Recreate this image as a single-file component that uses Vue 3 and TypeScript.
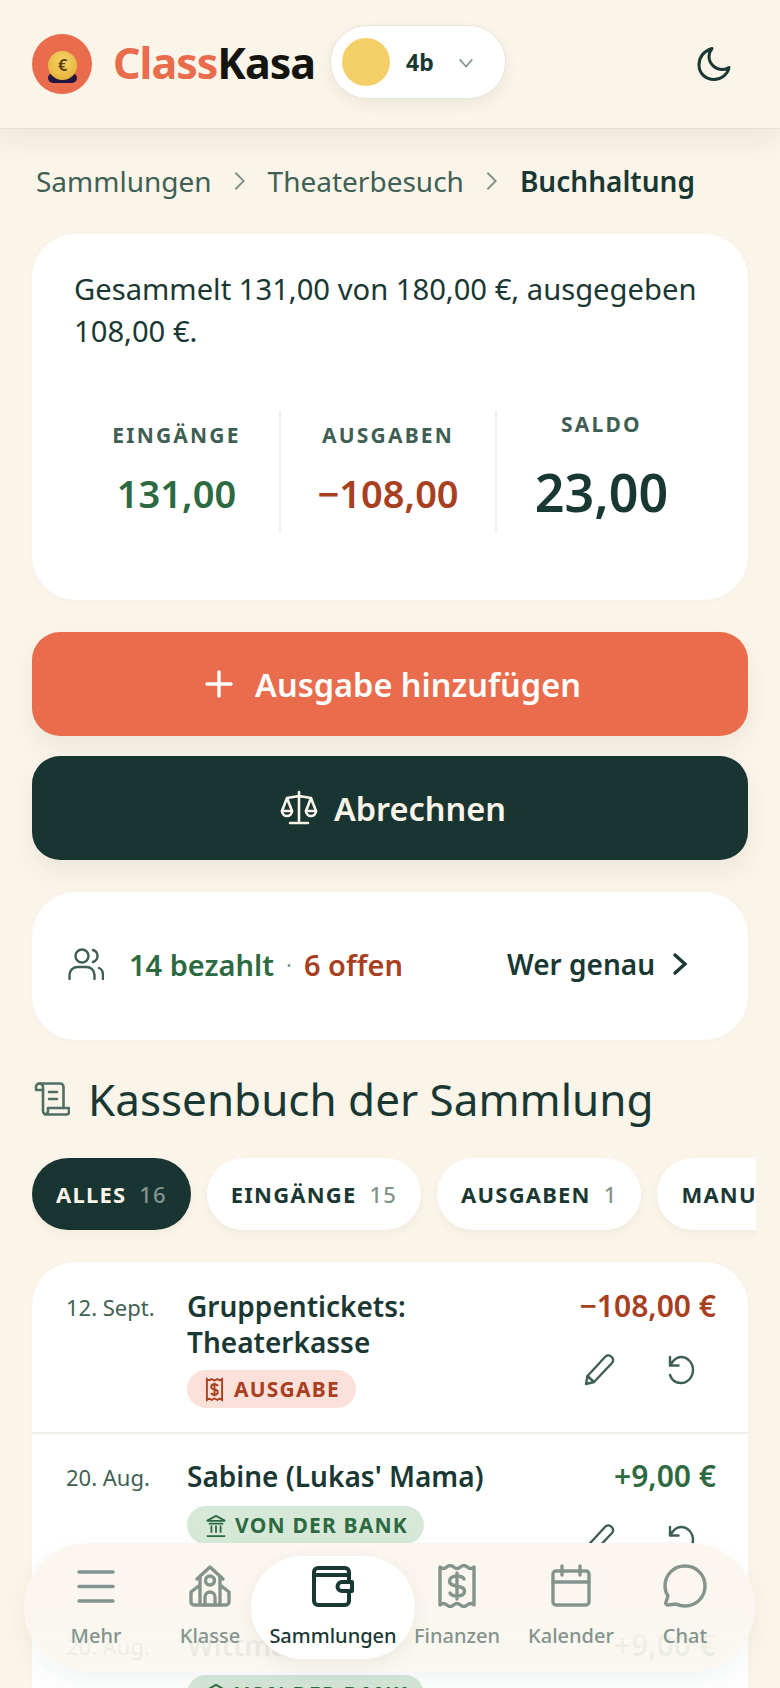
<template>
  <div class="page">
    <header class="topbar">
      <div class="logo">
        <span class="coin-base"></span>
        <span class="coin">€</span>
      </div>
      <div class="brand"><span class="brand-a">Class</span>Kasa</div>
      <button class="class-pill">
        <span class="swatch"></span>
        <span class="class-name">4b</span>
        <svg class="pill-chevron" viewBox="0 0 20 20"><path d="M3 6l7 8 7-8" /></svg>
      </button>
      <svg class="moon" viewBox="0 0 36 36"><path d="M16 2.500C9 5 3 10.500 3 19c0 8.500 6.500 14.500 15 14.500 7.500 0 13.500-5 15-12-2 1.500-4 2-6.500 2C19 23.500 13 17.500 13 10.500c0-3 1-5.500 3-8Z" /></svg>
    </header>

    <main class="content">
      <nav class="crumbs">
        <span>Sammlungen</span>
        <svg class="crumb-sep" viewBox="0 0 14 24"><path d="M2 3l9 9-9 9" /></svg>
        <span>Theaterbesuch</span>
        <svg class="crumb-sep" viewBox="0 0 14 24"><path d="M2 3l9 9-9 9" /></svg>
        <strong>Buchhaltung</strong>
      </nav>

      <section class="card summary">
        <p class="summary-text">Gesammelt 131,00 von 180,00 €, ausgegeben 108,00 €.</p>
        <div class="stats">
          <div class="stat">
            <span class="stat-label">EINGÄNGE</span>
            <span class="stat-value plus">131,00</span>
          </div>
          <div class="stat">
            <span class="stat-label">AUSGABEN</span>
            <span class="stat-value minus">−108,00</span>
          </div>
          <div class="stat">
            <span class="stat-label">SALDO</span>
            <span class="stat-total">23,00</span>
          </div>
        </div>
      </section>

      <button class="action orange">
        <svg class="action-plus" viewBox="0 0 28 28"><path d="M14 2v24M2 14h24" /></svg>
        Ausgabe hinzufügen
      </button>
      <button class="action dark">
        <svg class="action-scale" viewBox="0 0 38 36">
          <path d="M19 2v29M10 33h18M7 8l12-2 12 2M7 8l-5 13M7 8l5 13M31 8l-5 13M31 8l5 13" />
          <path d="M2 21a5 5 0 0 0 10 0ZM26 21a5 5 0 0 0 10 0Z" />
        </svg>
        Abrechnen
      </button>

      <section class="card paid">
        <svg class="people" viewBox="0 0 36 32">
          <circle cx="14" cy="8" r="6.500" />
          <path d="M1.500 31v-4c0-5 4-8 8-8h9c4 0 8 3 8 8v4M25 2c3 1 4.500 3.500 4.500 6s-1.500 5-4.500 6M31 20c2.500 1 4 4 4 7v4" />
        </svg>
        <span class="paid-yes">14 bezahlt</span>
        <span class="paid-dot">·</span>
        <span class="paid-no">6 offen</span>
        <span class="paid-link">Wer genau</span>
        <svg class="paid-chevron" viewBox="0 0 16 24"><path d="M3 3l10 9-10 9" /></svg>
      </section>

      <h2 class="ledger-title">
        <svg class="ledger-icon" viewBox="0 0 36 34">
          <path d="M2 7V5a3.500 3.500 0 0 1 7 0v24a3.500 3.500 0 0 0 3.500 3.500h20A2.500 2.500 0 0 0 35 30v-4H14v3a3.500 3.500 0 0 1-3 3.500" />
          <path d="M5 1.500h21a3.500 3.500 0 0 1 3.500 3.500v21M2 8h7M15 10h8M15 17h8" />
        </svg>
        Kassenbuch der Sammlung
      </h2>

      <div class="filters">
        <button
          v-for="f in filters"
          :key="f.label"
          class="chip"
          :class="{ active: f.active }"
        >
          {{ f.label }}<span v-if="f.count" class="chip-count">{{ f.count }}</span>
        </button>
      </div>

      <section class="card ledger">
        <article v-for="row in rows" :key="row.title" class="row">
          <span class="row-date">{{ row.date }}</span>
          <div class="row-main">
            <div class="row-title">{{ row.title }}</div>
            <span class="badge" :class="row.kind">
              <svg v-if="row.kind === 'out'" class="badge-icon" viewBox="0 0 20 26">
                <path d="M2 2l2.500 1.500L7 2l3 1.500L13 2l2.500 1.500L18 2v22l-2.500-1.500L13 24l-3-1.500L7 24l-2.500-1.500L2 24Z" />
                <path d="M13.500 9.500C13 8 11.500 7.500 10 7.500c-2 0-3.500 1-3.500 2.800 0 3.700 7 1.700 7 5.400 0 1.800-1.500 2.800-3.500 2.800-1.500 0-3-.5-3.500-2M10 6v14" />
              </svg>
              <svg v-else class="badge-icon bank" viewBox="0 0 24 26">
                <path d="M2 8l10-5.500L22 8ZM4 11h16M7 13v8M12 13v8M17 13v8M2 24.500h20" />
              </svg>
              {{ row.badge }}
            </span>
          </div>
          <div class="row-side">
            <div class="row-amount" :class="row.kind === 'out' ? 'minus' : 'plus'">{{ row.amount }}</div>
            <div class="row-actions">
              <svg class="row-icon" viewBox="0 0 32 32">
                <path d="M2 30l1.500-8 17.500-19c1.700-1.800 4.300-2 6.200-.4l.4.300c1.900 1.600 2 4.300.4 6.100L10 28Z" />
                <path d="M3.500 22L10 28" />
              </svg>
              <svg class="row-icon" viewBox="0 0 32 32">
                <path d="M6 3v8.500h8.500M6.500 11C9 6.500 12.500 3 17 3c6.500 0 12 5.800 12 13s-5.500 13-12 13c-5.500 0-9.500-3.500-11-8" />
              </svg>
            </div>
          </div>
        </article>
      </section>
    </main>

    <nav class="tabbar">
      <button v-for="t in tabs" :key="t.label" class="tab" :class="{ current: t.current }">
        <svg class="tab-icon" viewBox="0 0 44 44">
          <path v-for="d in t.paths" :key="d" :d="d" />
        </svg>
        <span>{{ t.label }}</span>
      </button>
    </nav>
  </div>
</template>

<script setup lang="ts">
interface Row {
  date: string;
  title: string;
  kind: "out" | "in";
  badge: string;
  amount: string;
}

const filters = [
  { label: "ALLES", count: "16", active: true },
  { label: "EINGÄNGE", count: "15", active: false },
  { label: "AUSGABEN", count: "1", active: false },
  { label: "MANUELL", count: "", active: false },
];

const rows: Row[] = [
  { date: "12. Sept.", title: "Gruppentickets: Theaterkasse", kind: "out", badge: "AUSGABE", amount: "−108,00 €" },
  { date: "20. Aug.", title: "Sabine (Lukas' Mama)", kind: "in", badge: "VON DER BANK", amount: "+9,00 €" },
  { date: "20. Aug.", title: "Wittmann", kind: "in", badge: "VON DER BANK", amount: "+9,00 €" },
];

const tabs = [
  { label: "Mehr", current: false, paths: ["M5 8h34M5 22.500h34M5 37h34"] },
  {
    label: "Klasse",
    current: false,
    paths: [
      "M9 15L22 3l13 12",
      "M12 13v28M32 13v28M12 21l-9 7v10a3 3 0 0 0 3 3h32a3 3 0 0 0 3-3V28l-9-7",
      "M17 41v-8a5 5 0 0 1 10 0v8",
      "M22 12a4.500 4.500 0 1 1 0 9 4.500 4.500 0 0 1 0-9Z",
    ],
  },
  {
    label: "Sammlungen",
    current: true,
    paths: [
      "M38 17V8a4 4 0 0 0-4-4H7a4 4 0 0 0-4 4v29a4 4 0 0 0 4 4h27a4 4 0 0 0 4-4v-9",
      "M3 11h35",
      "M31 18h10v9H31a4.500 4.500 0 0 1 0-9Z",
    ],
  },
  {
    label: "Finanzen",
    current: false,
    paths: [
      "M5 3q3.400 3 6.800 0t6.800 0 6.800 0 6.800 0 6.800 0v38q-3.400-3-6.800 0t-6.800 0-6.800 0-6.800 0-6.800 0Z",
      "M29 15c-1-2-3.500-3-7-3-4.500 0-7.500 2-7.500 5.200 0 6.800 15 3 15 9.800 0 3.200-3 5-7.500 5-3.500 0-6-1-7-3M22 9v26",
    ],
  },
  {
    label: "Kalender",
    current: false,
    paths: [
      "M7 7h30a3 3 0 0 1 3 3v28a3 3 0 0 1-3 3H7a3 3 0 0 1-3-3V10a3 3 0 0 1 3-3Z",
      "M4 18h36M13 2v9M31 2v9",
    ],
  },
  {
    label: "Chat",
    current: false,
    paths: [
      "M22 2c11.500 0 20 9 20 20s-8.500 20-20 20c-3 0-6-.5-9-2l-8 1c-2 0-3-1.500-2-3l2-6C3 29 2 25.500 2 22 2 11 10.500 2 22 2Z",
    ],
  },
];
</script>

<style scoped>
.page {
  position: relative;
  height: 1688px;
  overflow: hidden;
  background: #fbf4e9;
  color: #1a3833;
  font-family: "Noto Sans", sans-serif;
}

button {
  font-family: inherit;
  border: none;
  cursor: pointer;
}

.topbar {
  display: flex;
  align-items: center;
  height: 128px;
  padding: 0 48px 0 32px;
  box-sizing: border-box;
  background: #fbf4e9;
  box-shadow: 0 1px 1px rgba(30, 50, 40, 0.06), 0 14px 26px rgba(30, 50, 40, 0.06);
  position: relative;
}

.logo {
  position: relative;
  width: 60px;
  height: 60px;
  flex: none;
  border-radius: 50%;
  background: #e96c4c;
}

.coin {
  position: absolute;
  left: 16px;
  top: 17px;
  width: 29px;
  height: 29px;
  border-radius: 50%;
  background: radial-gradient(circle at 50% 35%, #f7d768, #e0a82e);
  color: #5f3d0c;
  font-size: 16px;
  font-weight: 700;
  line-height: 29px;
  text-align: center;
}

.coin-base {
  position: absolute;
  left: 16px;
  top: 39px;
  width: 29px;
  height: 10px;
  border-radius: 6px;
  background: #241640;
}

.brand {
  margin-left: 21px;
  font-size: 43px;
  font-weight: 700;
  letter-spacing: -1px;
  line-height: 60px;
  margin-top: -2px;
  color: #15150f;
  white-space: nowrap;
}

.brand-a {
  color: #e96c4c;
}

.class-pill {
  display: flex;
  align-items: center;
  width: 176px;
  height: 74px;
  margin-left: 15px;
  margin-top: -4px;
  padding: 0 11px;
  box-sizing: border-box;
  border-radius: 37px;
  background: #fff;
  border: 1px solid #e8e5da;
  box-shadow: 0 6px 16px rgba(30, 50, 40, 0.06);
}

.swatch {
  width: 48px;
  height: 48px;
  flex: none;
  border-radius: 50%;
  background: #f4cf67;
}

.class-name {
  margin-left: 16px;
  font-size: 23px;
  font-weight: 700;
  color: #1a3833;
}

.pill-chevron {
  width: 18px;
  height: 18px;
  margin-left: 23px;
  margin-top: 2px;
}

.pill-chevron path {
  fill: none;
  stroke: #84948d;
  stroke-width: 1.800;
}

.moon {
  width: 36px;
  height: 36px;
  margin-left: auto;
}

.moon path {
  fill: none;
  stroke: #1a3833;
  stroke-width: 3;
  stroke-linejoin: round;
}

.content {
  padding: 0 32px;
}

.crumbs {
  display: flex;
  align-items: center;
  gap: 21px;
  height: 34px;
  margin: 36px 0 36px 4px;
  font-size: 28px;
  color: #3f5f55;
}

.crumbs strong {
  font-weight: 600;
  color: #1a3833;
}

.crumb-sep {
  width: 14px;
  height: 22px;
}

.crumb-sep path {
  fill: none;
  stroke: #7f9188;
  stroke-width: 2;
}

.card {
  background: #fff;
  border-radius: 44px;
  box-shadow: 0 2px 10px rgba(60, 60, 30, 0.02);
}

.summary {
  height: 366px;
  padding: 34px 42px 0;
  box-sizing: border-box;
}

.summary-text {
  margin: 0;
  font-size: 29.200px;
  line-height: 42px;
}

.stats {
  display: grid;
  grid-template-columns: 205px 216px 1fr;
  height: 122px;
  margin-top: 58px;
}

.stat {
  display: flex;
  flex-direction: column;
  align-items: center;
  justify-content: center;
  padding-bottom: 4px;
  box-sizing: border-box;
}

.stat + .stat {
  border-left: 2px solid #f0efe9;
}

.stat-label {
  font-size: 21px;
  font-weight: 700;
  letter-spacing: 2.200px;
  line-height: 28px;
  color: #3f5f55;
}

.stat-value {
  margin-top: 18px;
  font-size: 38px;
  font-weight: 600;
  line-height: 52px;
}

.stat-total {
  margin: 21px 0 4px;
  font-size: 52px;
  font-weight: 600;
  line-height: 66px;
}

.plus {
  color: #2d6a41;
}

.minus {
  color: #a8401f;
}

.action {
  display: flex;
  align-items: center;
  justify-content: center;
  width: 100%;
  height: 104px;
  margin-top: 20px;
  padding: 0 0 0 6px;
  border-radius: 28px;
  font-size: 32.500px;
  font-weight: 600;
  box-shadow: 0 12px 24px rgba(60, 60, 30, 0.07);
}

.orange {
  margin-top: 32px;
  background: #e96c4c;
  color: #fff;
}

.dark {
  background: #183532;
  color: #fbf4e9;
}

.action-plus {
  width: 28px;
  height: 28px;
  margin-right: 22px;
}

.action-plus path {
  fill: none;
  stroke: #fff;
  stroke-width: 3.400;
  stroke-linecap: round;
}

.action-scale {
  width: 38px;
  height: 36px;
  margin-right: 16px;
}

.action-scale path {
  fill: none;
  stroke: #fbf4e9;
  stroke-width: 2.600;
  stroke-linecap: round;
  stroke-linejoin: round;
}

.paid {
  display: flex;
  align-items: center;
  height: 148px;
  margin-top: 32px;
  padding: 0 60px 4px 36px;
  box-sizing: border-box;
}

.people {
  width: 36px;
  height: 32px;
  margin-right: 25px;
}

.people circle,
.people path {
  fill: none;
  stroke: #3f5f55;
  stroke-width: 2.400;
  stroke-linecap: round;
}

.paid-yes,
.paid-no,
.paid-link {
  font-size: 29px;
  font-weight: 600;
}

.paid-yes {
  color: #2d6a41;
}

.paid-dot {
  margin: 0 12px;
  font-size: 22px;
  color: #84948d;
}

.paid-no {
  color: #a8401f;
}

.paid-link {
  margin-left: auto;
  font-size: 28px;
}

.paid-chevron {
  width: 16px;
  height: 24px;
  margin-left: 17px;
}

.paid-chevron path {
  fill: none;
  stroke: #1a3833;
  stroke-width: 3.400;
  stroke-linecap: round;
}

.ledger-title {
  display: flex;
  align-items: center;
  height: 60px;
  margin: 29px 0 29px;
  font-size: 44px;
  font-weight: 400;
  white-space: nowrap;
}

.ledger-icon {
  width: 36px;
  height: 34px;
  margin: 0 18px 0 2px;
}

.ledger-icon path {
  fill: none;
  stroke: #4f6f65;
  stroke-width: 2.600;
  stroke-linecap: round;
  stroke-linejoin: round;
}

.filters {
  display: flex;
  gap: 16px;
  width: 724px;
  overflow: hidden;
  padding-bottom: 10px;
}

.chip {
  flex: none;
  height: 72px;
  padding: 0 24px;
  border-radius: 36px;
  background: #fff;
  color: #1a3833;
  font-size: 22px;
  font-weight: 700;
  letter-spacing: 1.200px;
  box-shadow: 0 4px 10px rgba(60, 60, 30, 0.05);
}

.chip.active {
  background: #183532;
  color: #fbf4e9;
}

.chip-count {
  margin-left: 13px;
  font-weight: 500;
  color: #84948d;
}

.ledger {
  margin-top: 22px;
  overflow: hidden;
  padding-bottom: 40px;
}

.row {
  display: grid;
  grid-template-columns: 121px 1fr auto;
  padding: 26px 32px 24px 34px;
}

.row + .row {
  border-top: 2px solid #f0efe9;
  padding-top: 24px;
}

.row-date {
  padding-top: 4px;
  font-size: 22px;
  line-height: 30px;
  color: #3f5f55;
}

.row-title {
  max-width: 300px;
  font-size: 28px;
  font-weight: 600;
  line-height: 36px;
}

.row:not(:first-child) .row-title {
  max-width: none;
}

.badge {
  display: inline-flex;
  align-items: center;
  height: 38px;
  margin-top: 10px;
  padding: 0 16px 0 18px;
  border-radius: 19px;
  font-size: 21px;
  font-weight: 700;
  letter-spacing: 1.200px;
}

.badge.out {
  background: #fbe1da;
  color: #a8401f;
}

.badge.in {
  margin-top: 12px;
  background: #d6e8d8;
  color: #2d6a41;
}

.badge-icon {
  width: 19px;
  height: 25px;
  margin-right: 10px;
}

.badge-icon.bank {
  width: 22px;
  margin-right: 8px;
}

.badge-icon path {
  fill: none;
  stroke: currentColor;
  stroke-width: 2;
}

.row-side {
  display: flex;
  flex-direction: column;
  align-items: flex-end;
  height: 119px;
}

.row-amount {
  font-size: 30px;
  font-weight: 600;
  line-height: 36px;
}

.row-actions {
  display: flex;
  gap: 48px;
  align-items: center;
  height: 56px;
  margin: 18px 20px 0 0;
}

.row-icon {
  width: 32px;
  height: 32px;
}

.row-icon path {
  fill: none;
  stroke: #3f5f55;
  stroke-width: 2.400;
  stroke-linecap: round;
  stroke-linejoin: round;
}

.tabbar {
  position: absolute;
  left: 24px;
  bottom: 16px;
  display: flex;
  width: 731px;
  height: 129px;
  padding: 0 15px;
  box-sizing: border-box;
  align-items: center;
  border-radius: 65px;
  background: linear-gradient(rgb(251, 247, 240) 45%, rgba(250, 247, 240, 0.9));
  box-shadow: 0 10px 26px rgba(40, 60, 70, 0.06);
}

.tab {
  display: flex;
  flex-direction: column;
  align-items: center;
  flex: none;
  width: 114px;
  height: 103px;
  padding: 8px 0 0;
  background: none;
  color: #84948d;
  font-size: 20px;
  font-weight: 500;
}

.tab span {
  margin-top: 14px;
  line-height: 28px;
  white-space: nowrap;
}

.tab.current {
  position: relative;
  width: 164px;
  margin: 0 -15px 0 -16px;
  border-radius: 52px;
  background: #fff;
  color: #1a3833;
  box-shadow: 0 6px 20px rgba(60, 60, 30, 0.08);
}

.tab-icon {
  width: 44px;
  height: 44px;
}

.tab-icon path {
  fill: none;
  stroke: currentColor;
  stroke-width: 3.400;
  stroke-linecap: round;
  stroke-linejoin: round;
}

.tab.current .tab-icon path {
  stroke-width: 4;
}
</style>
